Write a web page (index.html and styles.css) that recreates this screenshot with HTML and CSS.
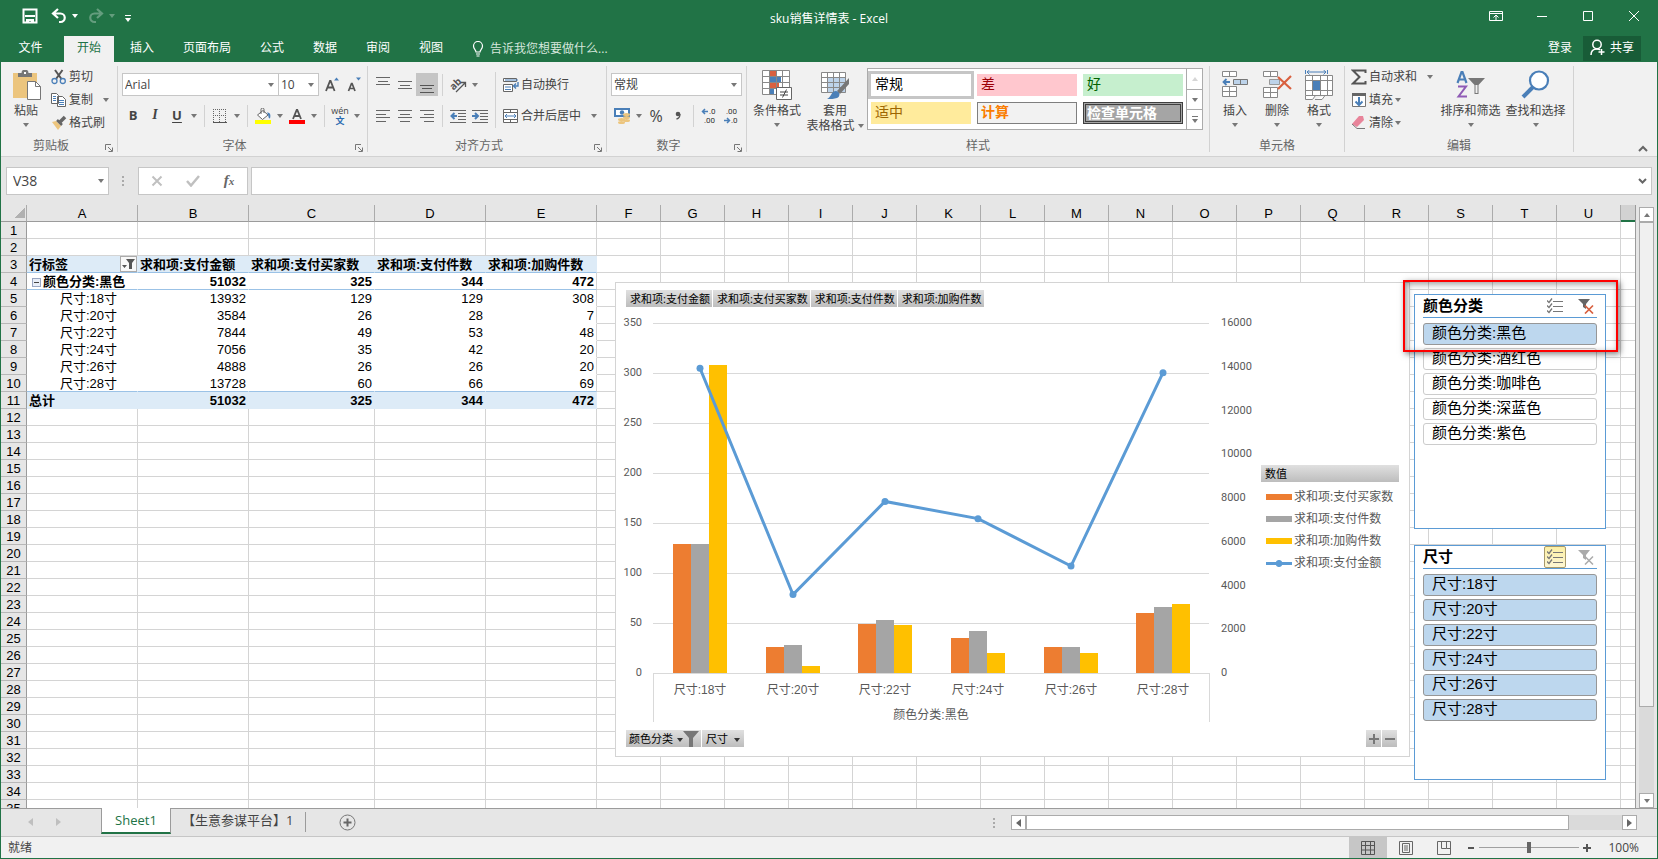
FILE: index.html
```html
<!DOCTYPE html>
<html lang="zh-CN">
<head>
    <meta charset="UTF-8">
    <title>sku销售详情表 - Excel</title>
    <link rel="stylesheet" href="styles.css">
</head>
<body>
    <!-- 标题栏 -->
    <header class="titlebar">
        <div class="quick">
            <button aria-label="保存"><svg width="16" height="16" viewBox="0 0 16 16"><path d="M1.5 1.5h13v13h-13z" fill="none" stroke="#fff" stroke-width="2"/><path d="M3 7h10v2H3zM4 11h8v4H9v-2H7v2H4z" fill="#fff"/></svg></button>
            <button aria-label="撤消"><svg width="16" height="16" viewBox="0 0 16 16"><path d="M7 1L2 5.500l5 4.500M2 5.500h7.500a4 4 0 0 1 0 8.500H8" fill="none" stroke="#fff" stroke-width="2.200"/></svg></button>
            <i class="caret white"></i>
            <button class="off" aria-label="恢复"><svg width="16" height="16" viewBox="0 0 16 16"><path d="M9 1l5 4.500L9 10M14 5.500H6.500a4 4 0 0 0 0 8.500H8" fill="none" stroke="#fff" stroke-width="2.200"/></svg></button>
            <i class="caret white off"></i>
            <button class="custom dash" aria-label="自定义快速访问工具栏"><i class="caret white"></i></button>
        </div>
        <h1>sku销售详情表 - Excel</h1>
        <div class="win">
            <button aria-label="功能区显示选项"><svg width="14" height="12" viewBox="0 0 14 12"><path d="M.5 1.500h13v9H.5zM.5 3.500h13M7 10V5.500M4.500 7.500L7 5l2.500 2.500" fill="none" stroke="#fff"/></svg></button>
            <button aria-label="最小化"><svg width="12" height="12" viewBox="0 0 12 12"><path d="M1 6.500h10" stroke="#fff"/></svg></button>
            <button aria-label="最大化"><svg width="12" height="12" viewBox="0 0 12 12"><path d="M1.500 1.500h9v9h-9z" fill="none" stroke="#fff"/></svg></button>
            <button aria-label="关闭"><svg width="12" height="12" viewBox="0 0 12 12"><path d="M1 1l10 10M11 1L1 11" stroke="#fff"/></svg></button>
        </div>
    </header>

    <nav class="tabs">
        <button class="file">文件</button>
        <button class="on">开始</button>
        <button>插入</button>
        <button>页面布局</button>
        <button>公式</button>
        <button>数据</button>
        <button>审阅</button>
        <button>视图</button>
        <button class="tell"><svg width="12" height="16" viewBox="0 0 12 16"><path d="M4 11C4 9 1.500 8 1.500 5a4.500 4.500 0 0 1 9 0c0 3-2.500 4-2.500 6zM4 13h4M4.500 15h3" fill="none" stroke="#fff" stroke-width="1.200"/></svg>告诉我您想要做什么...</button>
        <button class="login">登录</button>
        <button class="share"><svg width="16" height="17" viewBox="0 0 16 17"><path d="M1 16c0-3.500 2-6 6-6 1.500 0 2.500.4 3 .8M11.500 10v6M8.500 13h6" fill="none" stroke="#fff" stroke-width="1.500"/><circle cx="7" cy="5.500" r="4.200" fill="none" stroke="#fff" stroke-width="1.500"/></svg>共享</button>
    </nav>

    <!-- 功能区 -->
    <div class="ribbon">
        <section class="group g-clip">
            <div class="body">
                <button class="big"><svg width="30" height="30" viewBox="0 0 30 30"><path d="M2 3h24v25H2z" fill="#ecc57e"/><path d="M7 3h3.500a3.500 3.500 0 0 1 7 0H21v4H7z" fill="#777"/><path d="M13 2h2v2h-2z" fill="#fff"/><path d="M16.500 11.500h8l5 5v13h-13z" fill="#fff" stroke="#777"/><path d="M24.500 11.500v5h5" fill="none" stroke="#777"/></svg><span>粘贴</span><i class="caret"></i></button>
                <div class="col">
                    <button class="line"><svg width="16" height="16" viewBox="0 0 16 16"><path d="M4 1l6.500 9M11.500 1L5 10" fill="none" stroke="#555" stroke-width="2"/><circle cx="3.500" cy="12" r="2.500" fill="none" stroke="#4a7fb8" stroke-width="1.300"/><circle cx="11.800" cy="12" r="2.500" fill="none" stroke="#4a7fb8" stroke-width="1.300"/></svg>剪切</button>
                    <button class="line"><svg width="16" height="16" viewBox="0 0 16 16"><path d="M.5 1.500h5l2 2v8h-7zM6.500 4.500h5l3 3v7h-8z" fill="#fff" stroke="#666"/><path d="M2 4.500h3M2 6.500h3M2 8.500h3M8 8.500h5M8 10.500h5M8 12.500h5" stroke="#4a7fb8"/></svg>复制<i class="caret far"></i></button>
                    <button class="line"><svg width="16" height="16" viewBox="0 0 16 16"><path d="M1 7l4-1 5 5-3 4z" fill="#ecc57e"/><path d="M6 5l5 5" stroke="#666" stroke-width="2.500"/><path d="M9 7l5-5" stroke="#666" stroke-width="3.500"/></svg>格式刷</button>
                </div>
            </div>
            <div class="name"><span>剪贴板</span><button class="launch" aria-label="剪贴板选项"><svg width="8" height="8" viewBox="0 0 8 8"><path d="M.5 6V.5H6M3 3l4 4M7.500 3.500v4h-4" fill="none" stroke="#777"/></svg></button></div>
        </section>

        <section class="group g-font">
            <div class="body rows">
                <div class="row">
                    <label class="pick font"><select aria-label="字体"><option>Arial</option></select><i class="caret"></i></label>
                    <label class="pick size"><select aria-label="字号"><option>10</option></select><i class="caret"></i></label>
                    <button class="ic first" aria-label="增大字号"><svg width="16" height="16" viewBox="0 0 16 16"><path d="M2 14L6 4h.6l4 10M3.500 10.500h5.500" fill="none" stroke="#555" stroke-width="1.800"/><path d="M10 3.500l2.500-3 2.500 3z" fill="#4a7fb8"/></svg></button>
                    <button class="ic" aria-label="减小字号"><svg width="16" height="16" viewBox="0 0 16 16"><path d="M2.500 14L5.500 6.500h.6L9 14M4 11.500h4" fill="none" stroke="#555" stroke-width="1.700"/><path d="M10 .5h5l-2.500 3z" fill="#4a7fb8"/></svg></button>
                </div>
                <div class="row">
                    <button class="ic b">B</button>
                    <button class="ic i">I</button>
                    <button class="ic u">U</button>
                    <button class="drop" aria-label="下划线选项"><i class="caret"></i></button>
                    <span class="sep"></span>
                    <button class="ic" aria-label="边框"><svg width="14" height="14" viewBox="0 0 14 14"><path d="M0 .5h14M0 6.500h14M.5 0v14M6.500 0v14M12.500 0v14" stroke="#666" stroke-dasharray="1 1" fill="none"/><path d="M0 13.500h14" stroke="#555"/></svg></button>
                    <button class="drop" aria-label="边框选项"><i class="caret"></i></button>
                    <span class="sep"></span>
                    <button class="ic" aria-label="填充颜色"><svg width="16" height="16" viewBox="0 0 16 16"><path d="M2.500 7L8 2.500l5 4.500-5.500 4.500z" fill="#fff" stroke="#666"/><path d="M6 6V1.500a1.500 1.500 0 0 1 3 0V5" fill="none" stroke="#666"/><path d="M12 4.500c3 0 4 2 3 6-2 0-1-3-3-6z" fill="#4a7fb8"/><path d="M0 12h16v4H0z" fill="#ff0"/></svg></button>
                    <button class="drop" aria-label="填充颜色选项"><i class="caret"></i></button>
                    <button class="ic" aria-label="字体颜色"><svg width="16" height="16" viewBox="0 0 16 16"><path d="M4 11L7.700 2h.6L12 11M5.500 8h5" fill="none" stroke="#555" stroke-width="1.800"/><path d="M0 12h16v4H0z" fill="#f00"/></svg></button>
                    <button class="drop" aria-label="字体颜色选项"><i class="caret"></i></button>
                    <span class="sep"></span>
                    <button class="ic wen"><span>wén</span><b>文</b></button>
                    <button class="drop" aria-label="拼音选项"><i class="caret"></i></button>
                </div>
            </div>
            <div class="name"><span>字体</span><button class="launch" aria-label="字体设置"><svg width="8" height="8" viewBox="0 0 8 8"><path d="M.5 6V.5H6M3 3l4 4M7.500 3.500v4h-4" fill="none" stroke="#777"/></svg></button></div>
        </section>

        <section class="group g-align">
            <div class="body">
                <div class="rows">
                    <div class="row">
                        <button class="ic" aria-label="顶端对齐"><svg width="14" height="16" viewBox="0 0 14 16"><path d="M0 .5h14M2 4.500h10M0 7.500h14" stroke="#666"/></svg></button>
                        <button class="ic" aria-label="垂直居中"><svg width="14" height="16" viewBox="0 0 14 16"><path d="M0 4.500h14M2 8.500h10M0 11.500h14" stroke="#666"/></svg></button>
                        <button class="ic on" aria-label="底端对齐"><svg width="14" height="16" viewBox="0 0 14 16"><path d="M0 8.500h14M2 11.500h10M0 15.500h14" stroke="#555"/></svg></button>
                        <span class="sep"></span>
                        <button class="ic" aria-label="方向"><svg width="18" height="18" viewBox="0 0 18 18"><path d="M7 16l9-9M12 6.500h4.500V11" fill="none" stroke="#555" stroke-width="1.300"/><text x="1" y="12" transform="rotate(-45 6 9)" class="ab">ab</text></svg></button>
                        <button class="drop" aria-label="方向选项"><i class="caret"></i></button>
                    </div>
                    <div class="row">
                        <button class="ic" aria-label="左对齐"><svg width="14" height="12" viewBox="0 0 14 12"><path d="M0 .5h14M0 4.500h10M0 7.500h14M0 11.500h10" stroke="#666"/></svg></button>
                        <button class="ic" aria-label="居中"><svg width="14" height="12" viewBox="0 0 14 12"><path d="M0 .5h14M2 4.500h10M0 7.500h14M2 11.500h10" stroke="#666"/></svg></button>
                        <button class="ic" aria-label="右对齐"><svg width="14" height="12" viewBox="0 0 14 12"><path d="M0 .5h14M4 4.500h10M0 7.500h14M4 11.500h10" stroke="#666"/></svg></button>
                        <span class="sep"></span>
                        <button class="ic" aria-label="减少缩进量"><svg width="16" height="14" viewBox="0 0 16 14"><path d="M0 1.500h16M8 4.500h8M8 7.500h8M8 10.500h8M0 13.500h16" stroke="#666"/><path d="M7 7H2M4.500 4L1.500 7l3 3" fill="none" stroke="#4a7fb8" stroke-width="2"/></svg></button>
                        <button class="ic" aria-label="增加缩进量"><svg width="16" height="14" viewBox="0 0 16 14"><path d="M0 1.500h16M8 4.500h8M8 7.500h8M8 10.500h8M0 13.500h16" stroke="#666"/><path d="M0 7h5M3 4l3 3-3 3" fill="none" stroke="#4a7fb8" stroke-width="2"/></svg></button>
                    </div>
                </div>
                <span class="sep tall"></span>
                <div class="rows">
                    <div class="row">
                        <button class="line wide"><svg width="16" height="16" viewBox="0 0 16 16"><path d="M.5 1.500h13v3H.5zM.5 7.500h9v7h-9z" fill="#fff" stroke="#666"/><path d="M2 3h13M2 10h6M2 12.500h6" stroke="#4a7fb8"/><path d="M15 5v4h-4M13 6.500L10.500 9l2.500 2.500" fill="none" stroke="#4a7fb8" stroke-width="1.400"/></svg>自动换行</button>
                    </div>
                    <div class="row">
                        <button class="line wide"><svg width="16" height="16" viewBox="0 0 16 16"><path d="M.5 1.500h14v13H.5zM.5 4.500h14M.5 11.500h14M7.500 1.500v3M7.500 11.500v3" fill="#fff" stroke="#666"/><path d="M2 8h11M4 6L2 8l2 2M11 6l2 2-2 2" fill="none" stroke="#4a7fb8"/></svg>合并后居中<i class="caret far"></i></button>
                    </div>
                </div>
            </div>
            <div class="name"><span>对齐方式</span><button class="launch" aria-label="对齐设置"><svg width="8" height="8" viewBox="0 0 8 8"><path d="M.5 6V.5H6M3 3l4 4M7.500 3.500v4h-4" fill="none" stroke="#777"/></svg></button></div>
        </section>

        <section class="group g-num">
            <div class="body rows">
                <div class="row"><label class="pick fmt"><select aria-label="数字格式"><option>常规</option></select><i class="caret"></i></label></div>
                <div class="row">
                    <button class="ic" aria-label="会计数字格式"><svg width="16" height="16" viewBox="0 0 16 16"><path d="M0 0h16v9H0z" fill="#4a7fb8"/><path d="M2 2h12v5H2z" fill="#fff"/><circle cx="8" cy="4.500" r="2.200" fill="#4a7fb8"/><ellipse cx="12.500" cy="6.500" rx="3.500" ry="1.500" fill="#ecc57e"/><ellipse cx="12.500" cy="9.500" rx="3.500" ry="1.500" fill="#ecc57e"/><ellipse cx="12.500" cy="12.500" rx="3.500" ry="1.500" fill="#ecc57e"/><ellipse cx="7.500" cy="11.500" rx="3.500" ry="1.500" fill="#ecc57e"/><ellipse cx="7.500" cy="14.500" rx="3.500" ry="1.500" fill="#ecc57e"/></svg></button>
                    <button class="drop" aria-label="货币选项"><i class="caret"></i></button>
                    <button class="ic pct">%</button>
                    <button class="ic comma" aria-label="千位分隔样式"><svg width="6" height="9" viewBox="0 0 6 9"><circle cx="3" cy="3" r="2.300" fill="#555"/><path d="M5 3c0 3-1.500 4.500-3.500 5" fill="none" stroke="#555" stroke-width="1.300"/></svg></button>
                    <span class="sep"></span>
                    <button class="ic dec" aria-label="增加小数位数"><svg width="16" height="16" viewBox="0 0 16 16"><path d="M7 3.500H2M4 1L1.500 3.500 4 6" fill="none" stroke="#4a7fb8" stroke-width="1.500"/><text x="8" y="6">.0</text><text x="3" y="15">.00</text></svg></button>
                    <button class="ic dec" aria-label="减少小数位数"><svg width="16" height="16" viewBox="0 0 16 16"><path d="M1 12.500h5M4 10l2.500 2.500L4 15" fill="none" stroke="#4a7fb8" stroke-width="1.500"/><text x="3" y="6">.00</text><text x="8" y="15">.0</text></svg></button>
                </div>
            </div>
            <div class="name"><span>数字</span><button class="launch" aria-label="数字设置"><svg width="8" height="8" viewBox="0 0 8 8"><path d="M.5 6V.5H6M3 3l4 4M7.500 3.500v4h-4" fill="none" stroke="#777"/></svg></button></div>
        </section>

        <section class="group g-style">
            <div class="body">
                <button class="big w56"><svg width="30" height="30" viewBox="0 0 30 30"><path d="M.5.500h27v24H.5z" fill="#fff"/><path d="M8 1h6v6H8zM8 13h9v6H8z" fill="#d9603f"/><path d="M8 7h11v6H8zM8 19h4v6H8z" fill="#4a7fb8"/><path d="M.5.500h27v24H.5zM.5 6.500h27M.5 12.500h27M.5 18.500h27M7.500.500v24M14.500.500v24M20.500.500v24" fill="none" stroke="#888"/><path d="M14.500 17.500h15v12h-15z" fill="#fff" stroke="#666"/><path d="M18 22h8M18 25h8M24.500 19.500l-4 8" stroke="#444"/></svg><span>条件格式</span><i class="caret"></i></button>
                <button class="big w60"><svg width="30" height="30" viewBox="0 0 30 30"><path d="M1.500 2.500h24v20h-24z" fill="#fff"/><path d="M8 8h18v15H8z" fill="#bdd3ea"/><path d="M1.500 2.500h24v20h-24zM1.500 7.500h24M1.500 12.500h24M1.500 17.500h24M7.500 2.500v20M13.500 2.500v20M19.500 2.500v20" fill="none" stroke="#888"/><path d="M29 8v6l-9 10-3-3z" fill="#777"/><path d="M7 29c4-1 4-8 9-8 5 1 4 6 1 7-3 1-6 1-10 1z" fill="#4a7fb8"/></svg><span>套用</span><span>表格格式 <i class="caret"></i></span></button>
                <div class="gallery">
                    <div class="cells">
                        <button class="normal">常规</button><button class="bad">差</button><button class="good">好</button>
                        <button class="mid">适中</button><button class="calc">计算</button><button class="check">检查单元格</button>
                    </div>
                    <div class="spin">
                        <button class="off" aria-label="上一行"><i class="caret up"></i></button>
                        <button aria-label="下一行"><i class="caret"></i></button>
                        <button class="dash" aria-label="其他"><i class="caret"></i></button>
                    </div>
                </div>
            </div>
            <div class="name"><span>样式</span></div>
        </section>

        <section class="group g-cell">
            <div class="body">
                <button class="big w42"><svg width="28" height="30" viewBox="0 0 28 30"><path d="M1.500 1.500h14v5h-14zM8.500 1.500v5M1.500 16.500h14v10h-14zM1.500 21.500h14M8.500 16.500v10" fill="#fff" stroke="#888"/><path d="M12.500 9.500h14v5h-14zM19.500 9.500v5" fill="#bdd3ea" stroke="#777"/><path d="M9 12H3M5.500 9L2.500 12l3 3" fill="none" stroke="#4a7fb8" stroke-width="1.800"/></svg><span>插入</span><i class="caret"></i></button>
                <button class="big w42"><svg width="30" height="30" viewBox="0 0 30 30"><path d="M1.500 1.500h14v5h-14zM8.500 1.500v5M1.500 17.500h14v10h-14zM1.500 22.500h14M8.500 17.500v10" fill="#fff" stroke="#888"/><path d="M7.500 9.500h10v5h-10z" fill="#bdd3ea" stroke="#999"/><path d="M16 7l13 12M29 6L16 19" stroke="#d9603f" stroke-width="2.200"/></svg><span>删除</span><i class="caret"></i></button>
                <button class="big w42"><svg width="30" height="30" viewBox="0 0 30 30"><path d="M1.500 0v4M23.500 0v4M3 2h19M5.500 0L3 2l2.500 2.500M19.500 0L22 2l-2.500 2.500" fill="none" stroke="#4a7fb8"/><path d="M1.500 5.500h27v20h-27zM1.500 10.500h27M1.500 20.500h27M8.500 5.500v20M16.500 5.500v20M23.500 5.500v20M1.500 25.500v4h7l3-4M11 29.500h7l3-4" fill="#fff" stroke="#888"/><path d="M9 11h7v9H9z" fill="#4a7fb8"/></svg><span>格式</span><i class="caret"></i></button>
            </div>
            <div class="name"><span>单元格</span></div>
        </section>

        <section class="group g-edit">
            <div class="body">
                <div class="col">
                    <button class="line"><svg width="16" height="16" viewBox="0 0 16 16"><path d="M14.500 4V1.500H2L8.500 8 2 14.500h12.500V12" fill="none" stroke="#555" stroke-width="2"/></svg>自动求和<i class="caret far"></i></button>
                    <button class="line"><svg width="16" height="16" viewBox="0 0 16 16"><path d="M1.500 1.500h13v13h-13z" fill="#fff" stroke="#777"/><path d="M1 1h14v3H1z" fill="#666"/><path d="M8 5v8M4.500 9.500L8 13l3.500-3.500" fill="none" stroke="#4a7fb8" stroke-width="2"/></svg>填充<i class="caret"></i></button>
                    <button class="line"><svg width="16" height="16" viewBox="0 0 16 16"><path d="M8 1l4 0 1 4-7 7-5-3z" fill="#e8849a"/><path d="M1 9l5 4.500h8" fill="none" stroke="#777"/></svg>清除<i class="caret"></i></button>
                </div>
                <button class="big w65"><svg width="32" height="30" viewBox="0 0 32 30"><path d="M2.500 13L6.500 2h1l4 11M4 9.500h6" fill="none" stroke="#4a7fb8" stroke-width="2.200"/><path d="M3 16.500h8L3.500 26.500H12" fill="none" stroke="#8f5bb5" stroke-width="2"/><path d="M13 8h17l-6.500 7v9h-4v-9z" fill="#777"/><path d="M20.500 15h2v8h-2z" fill="#f1f1f1"/></svg><span>排序和筛选</span><i class="caret"></i></button>
                <button class="big w65"><svg width="30" height="30" viewBox="0 0 30 30"><path d="M12 17L2 27" stroke="#4a7fb8" stroke-width="4"/><circle cx="18" cy="10.500" r="9" fill="#fff" stroke="#4a7fb8" stroke-width="2.200"/></svg><span>查找和选择</span><i class="caret"></i></button>
            </div>
            <div class="name"><span>编辑</span></div>
        </section>
        <button class="fold" aria-label="折叠功能区"><svg width="10" height="7" viewBox="0 0 10 7"><path d="M1 6l4-4 4 4" fill="none" stroke="#666" stroke-width="2"/></svg></button>
    </div>

    <!-- 编辑栏 -->
    <div class="formula">
        <label class="pick ref"><input type="text" value="V38" aria-label="名称框"><i class="caret"></i></label>
        <span class="dots"></span>
        <div class="fx">
            <button aria-label="取消"><svg width="12" height="12" viewBox="0 0 12 12"><path d="M1.500 1.500l9 9M10.500 1.500l-9 9" stroke="#c0c0c0" stroke-width="2"/></svg></button>
            <button aria-label="输入"><svg width="14" height="12" viewBox="0 0 14 12"><path d="M1 6l4 4.500L13 1" fill="none" stroke="#c0c0c0" stroke-width="2.500"/></svg></button>
            <button class="fn">f<small>x</small></button>
        </div>
        <label class="pick bar"><input type="text" aria-label="编辑栏"><svg width="9" height="7" viewBox="0 0 9 7"><path d="M1 1l3.500 3.500L8 1" fill="none" stroke="#666" stroke-width="2"/></svg></label>
    </div>

    <!-- 工作区 -->
    <main class="work">
        <div class="sheet">
            <table id="grid"></table>

            <div class="chart">
                <div class="fields">
                    <button>求和项:支付金额</button><button>求和项:支付买家数</button><button>求和项:支付件数</button><button>求和项:加购件数</button>
                </div>
                <div class="middle">
                    <svg id="plot" width="639" height="423" viewBox="0 0 639 423"></svg>
                    <div class="legend">
                        <button>数值</button>
                        <ul>
                            <li><i class="orange"></i>求和项:支付买家数</li>
                            <li><i class="gray"></i>求和项:支付件数</li>
                            <li><i class="yellow"></i>求和项:加购件数</li>
                            <li><i class="blue"></i>求和项:支付金额</li>
                        </ul>
                    </div>
                </div>
                <div class="fields">
                    <button class="axis">颜色分类<i class="caret dark"></i><svg width="16" height="17" viewBox="0 0 16 17"><path d="M0 1h16l-6 7v9H6V8z" fill="#777"/></svg></button><button class="axis wide">尺寸<i class="caret dark"></i></button>
                    <span class="grow"></span>
                    <button class="pm" aria-label="展开"><svg width="10" height="10" viewBox="0 0 10 10"><path d="M5 0v10M0 5h10" stroke="#777" stroke-width="2"/></svg></button><button class="pm" aria-label="折叠"><svg width="10" height="10" viewBox="0 0 10 10"><path d="M0 5h10" stroke="#777" stroke-width="2"/></svg></button>
                </div>
            </div>

            <div class="slicer color">
                <div class="head"><h2>颜色分类</h2>
                    <button aria-label="多选"><svg width="16" height="16" viewBox="0 0 16 16"><path d="M6 3.500h10M6 8.500h10M6 13.500h10" stroke="#777"/><path d="M0 2.500l2 2L5 .5M0 7.500l2 2 3-4M0 12.500l2 2 3-4" fill="none" stroke="#777" stroke-width="1.300"/></svg></button>
                    <button aria-label="清除筛选器"><svg width="16" height="16" viewBox="0 0 16 16"><path d="M0 1h12L8 6v5L5 9V6z" fill="#666"/><path d="M7 7.500l8 8M15 7.500l-8 8" stroke="#d9603f" stroke-width="1.700"/></svg></button>
                </div>
                <button class="item on">颜色分类:黑色</button>
                <button class="item">颜色分类:酒红色</button>
                <button class="item">颜色分类:咖啡色</button>
                <button class="item">颜色分类:深蓝色</button>
                <button class="item">颜色分类:紫色</button>
            </div>
            <div class="slicer measure">
                <div class="head"><h2>尺寸</h2>
                    <button class="on" aria-label="多选"><svg width="16" height="16" viewBox="0 0 16 16"><path d="M6 3.500h10M6 8.500h10M6 13.500h10" stroke="#777"/><path d="M0 2.500l2 2L5 .5M0 7.500l2 2 3-4M0 12.500l2 2 3-4" fill="none" stroke="#777" stroke-width="1.300"/></svg></button>
                    <button aria-label="清除筛选器"><svg width="16" height="16" viewBox="0 0 16 16"><path d="M0 1h12L8 6v5L5 9V6z" fill="#aaa"/><path d="M7 7.500l8 8M15 7.500l-8 8" stroke="#aaa" stroke-width="1.500"/></svg></button>
                </div>
                <button class="item on">尺寸:18寸</button>
                <button class="item on">尺寸:20寸</button>
                <button class="item on">尺寸:22寸</button>
                <button class="item on">尺寸:24寸</button>
                <button class="item on">尺寸:26寸</button>
                <button class="item on">尺寸:28寸</button>
            </div>
            <div class="mark"></div>
        </div>
        <div class="vscroll">
            <button aria-label="向上滚动"><i class="caret up"></i></button>
            <span class="thumb"></span>
            <span class="track"></span>
            <button aria-label="向下滚动"><i class="caret"></i></button>
        </div>
    </main>

    <div class="sheets">
        <div class="nav"><button aria-label="上一个工作表"><i class="tri left"></i></button><button aria-label="下一个工作表"><i class="tri right"></i></button></div>
        <button class="tab on">Sheet1</button>
        <button class="tab">【生意参谋平台】1</button>
        <button class="add" aria-label="新工作表"><svg width="17" height="17" viewBox="0 0 17 17"><circle cx="8.500" cy="8.500" r="7.500" fill="none" stroke="#777"/><path d="M8.500 4.500v8M4.500 8.500h8" stroke="#666" stroke-width="2"/></svg></button>
        <span class="grow"></span>
        <span class="dots"></span>
        <div class="hscroll">
            <button aria-label="向左滚动"><i class="tri left"></i></button>
            <span class="thumb"></span>
            <span class="track"></span>
            <button aria-label="向右滚动"><i class="tri right"></i></button>
        </div>
    </div>

    <footer class="status">
        <span>就绪</span>
        <span class="grow"></span>
        <button class="view on" aria-label="普通"><svg width="14" height="14" viewBox="0 0 14 14"><path d="M.5.500h13v13H.5zM.5 4.500h13M.5 9h13M4.500.500v13M9.500.500v13" fill="none" stroke="#555"/></svg></button>
        <button class="view" aria-label="页面布局"><svg width="14" height="14" viewBox="0 0 14 14"><path d="M.5.500h13v13H.5zM3.500 2.500h7v9h-7zM5 5h4M5 7h4M5 9h4" fill="none" stroke="#666"/></svg></button>
        <button class="view" aria-label="分页预览"><svg width="14" height="14" viewBox="0 0 14 14"><path d="M.5.500h13v13H.5zM4.500.500v7h5v-7M9.500 7.500h4" fill="none" stroke="#666"/></svg></button>
        <button class="step" aria-label="缩小"><svg width="8" height="8" viewBox="0 0 8 8"><path d="M1 4h6" stroke="#555" stroke-width="2"/></svg></button>
        <input type="range" min="0" max="100" value="50" aria-label="显示比例">
        <button class="step" aria-label="放大"><svg width="8" height="8" viewBox="0 0 8 8"><path d="M4 0v8M0 4h8" stroke="#555" stroke-width="2"/></svg></button>
        <button class="zoom">100%</button>
    </footer>
    <script src="script.js"></script>
</body>
</html>
```
FILE: styles.css
```css
*{
    margin: 0;
    padding: 0;
    box-sizing: border-box;
    list-style: none;
}
body {
    display: flex;
    flex-direction: column;
    height: 100vh;
    overflow: hidden;
    border: 1px solid #217346;
    border-top: 0;
    font: 12px/16px "Open Sans", "Noto Sans CJK SC", sans-serif;
    color: #444;
    background: #e6e6e6;
}
button, input, select {
    font: inherit;
    color: inherit;
    border: 0;
    background: none;
}
button {
    display: flex;
    flex: none;
    align-items: center;
    justify-content: center;
    white-space: nowrap;
}
svg {
    display: block;
    flex: none;
}
.grow {
    flex: 1;
}
.off {
    opacity: 0.3;
}
/* 小三角 */
.caret {
    display: inline-block;
    flex: none;
    border: 3px solid transparent;
    border-top: 4px solid #777;
    border-bottom: 0;
}
.caret.up {
    border-top: 0;
    border-bottom: 4px solid #777;
}
.caret.white {
    border-top-color: #fff;
}
.caret.dark {
    border-top-color: #333;
}
.caret.far {
    margin-left: 8px;
}
/* 三角上面带一条横线 */
.dash {
    flex-direction: column;
    gap: 2px;
}
.dash::before {
    content: "";
    width: 6px;
    height: 1px;
    background: #777;
}
.tri {
    border: 4px solid transparent;
}
.tri.left {
    border-right: 5px solid #666;
    border-left: 0;
}
.tri.right {
    border-left: 5px solid #666;
    border-right: 0;
}

/* 标题栏 */
.titlebar {
    display: grid;
    grid-template-columns: 1fr auto 1fr;
    flex: none;
    height: 36px;
    color: #fff;
    background: #217346;
}
.titlebar h1 {
    padding-top: 2px;
    font-size: 12px;
    font-weight: normal;
    line-height: 34px;
}
.quick {
    display: flex;
    align-items: center;
    padding: 0 0 4px 21px;
}
.quick button {
    margin-right: 5px;
}
.quick button + button {
    margin-left: 8px;
}
.quick .caret {
    margin-right: 10px;
}
.quick .custom {
    padding-top: 4px;
}
.quick .custom .caret {
    margin: 0;
}
.custom::before {
    background: #fff;
}
.win {
    display: flex;
    justify-content: flex-end;
    padding-bottom: 4px;
}
.win button {
    width: 46px;
}
.tabs {
    display: flex;
    flex: none;
    gap: 3px;
    height: 26px;
    padding-right: 16px;
    color: #fff;
    background: #217346;
}
.tabs button {
    padding: 0 13px 2px;
}
.tabs .file {
    width: 60px;
    padding-left: 12px;
}
.tabs .on {
    color: #217346;
    background: #f1f1f1;
}
.tabs .tell {
    gap: 6px;
    padding-bottom: 0;
    color: #d5e6dc;
}
.tabs .login {
    margin-left: auto;
    padding: 0 8px 2px;
}
.tabs .share {
    gap: 4px;
    padding: 0 7px 2px;
    margin-bottom: 1px;
    background: #185c37;
}

/* 功能区 */
.ribbon {
    display: flex;
    flex: none;
    height: 95px;
    padding: 4px 0;
    background: #f1f1f1;
    border-bottom: 1px solid #d2d2d2;
}
.group {
    display: flex;
    flex: none;
    flex-direction: column;
    border-right: 1px solid #d2d2d2;
}
.g-clip { width: 117px; }
.g-font { width: 250px; }
.g-align { width: 239px; }
.g-num { width: 140px; }
.g-font .body, .g-align .body, .g-num .body, .g-cell .body { padding-left: 4px; }
.g-style { width: 463px; }
.g-style .body { padding-left: 2px; }
.g-cell { width: 135px; }
.g-edit { width: 229px; }
.g-edit .body { padding-left: 6px; }
.g-edit .col { width: 87px; }
.body {
    display: flex;
    height: 72px;
}
.name {
    display: flex;
    height: 14px;
    line-height: 16px;
    color: #666;
}
.name span {
    flex: 1;
    text-align: center;
}
.launch {
    align-items: flex-end;
    width: 16px;
}
.big {
    flex-direction: column;
    justify-content: flex-start;
    width: 50px;
    padding-top: 4px;
    line-height: 15px;
}
.big svg {
    margin-bottom: 3px;
}
.big > .caret {
    margin-top: 5px;
}
.big span .caret {
    vertical-align: 2px;
}
.w42 { width: 42px; }
.w56 { width: 56px; }
.w60 { width: 60px; }
.w65 { width: 65px; }
.col {
    display: flex;
    flex-direction: column;
    gap: 1px;
}
.line {
    justify-content: flex-start;
    gap: 2px;
    height: 22px;
}
.line.wide {
    padding-left: 3px;
}
.rows {
    display: flex;
    flex-direction: column;
    gap: 8px;
    padding-top: 7px;
}
.row {
    display: flex;
    align-items: center;
    height: 23px;
}
.ic {
    width: 22px;
    height: 23px;
}
.ic.on {
    background: #c5c5c5;
}
.ic.first {
    margin-left: 2px;
}
.drop {
    width: 12px;
    height: 23px;
}
.sep {
    width: 1px;
    height: 22px;
    margin: 0 4px;
    background: #d2d2d2;
}
.sep.tall {
    height: 56px;
    margin-top: 6px;
}
.b, .i, .u {
    padding-bottom: 2px;
    font-size: 13px;
    font-weight: bold;
}
.i {
    font-family: "Liberation Serif", serif;
    font-size: 14px;
    font-style: italic;
}
.u {
    text-decoration: underline;
    text-underline-offset: 2px;
}
.wen {
    flex-direction: column;
    font-size: 9px;
    line-height: 10px;
}
.wen b {
    color: #2a6bb0;
}
.ab {
    font-size: 10px;
    font-weight: bold;
    fill: #555;
}
.pct {
    font-size: 16px;
}
.dec text {
    font-family: Roboto, sans-serif;
    font-size: 8px;
    fill: #333;
}
.pick {
    display: flex;
    flex: none;
    align-items: center;
    height: 23px;
    padding-right: 4px;
    background: #fff;
    border: 1px solid #c6c6c6;
}
.pick select, .pick input {
    flex: 1;
    min-width: 0;
    height: 21px;
    padding-left: 2px;
    appearance: none;
    outline: 0;
}
.font { width: 157px; }
.size { width: 41px; margin-left: -1px; }
.fmt { width: 131px; }
.gallery {
    display: flex;
    height: 62px;
    margin: 2px 0 0 2px;
    background: #fff;
    border: 1px solid #ababab;
}
.cells {
    display: grid;
    grid-template-columns: repeat(3, 100px);
    grid-auto-rows: 22px;
    gap: 6px;
    padding: 5px 3px;
}
.cells button {
    justify-content: flex-start;
    padding: 0 0 2px 4px;
    font-size: 14px;
}
.normal { color: #000; outline: 3px solid #c6c6c6; }
.bad { color: #9c0006; background: #ffc7ce; }
.good { color: #006100; background: #c6efce; }
.mid { color: #9c6500; background: #ffeb9c; }
.calc { color: #fa7d00; font-weight: bold; background: #f2f2f2; border: 1px solid #7f7f7f; }
.check { color: #fff; font-weight: bold; background: #a5a5a5; border: 3px double #3f3f3f; }
.cells .calc { padding-left: 3px; }
.cells .check { padding: 0 0 0 1px; }
.spin {
    display: grid;
    grid-template-rows: repeat(3, 20px);
    width: 16px;
    border-left: 1px solid #ababab;
}
.spin button + button {
    border-top: 1px solid #ababab;
}
.fold {
    align-items: flex-end;
    width: 20px;
    margin-left: auto;
    margin-right: 4px;
}

/* 编辑栏 */
.formula {
    display: flex;
    flex: none;
    height: 48px;
    padding: 10px 5px;
}
.formula .pick {
    height: 28px;
}
.formula input {
    padding: 0 0 2px 6px;
    font-size: 14px;
}
.ref { width: 103px; }
.formula .bar {
    flex: 1;
    margin-left: 3px;
}
.dots {
    align-self: center;
    width: 2px;
    height: 10px;
    background: repeating-linear-gradient(#aaa 0 2px, transparent 2px 4px);
}
.formula .dots {
    margin: 0 14px 0 13px;
}
.fx {
    display: flex;
    background: #fff;
    border: 1px solid #c6c6c6;
}
.fx button {
    width: 36px;
}
.fx .fn {
    align-items: baseline;
    font: italic bold 15px/24px "Liberation Serif", serif;
    color: #666;
}
.fn small {
    font-size: 11px;
}

/* 工作区 */
.work {
    display: flex;
    flex: 1;
    min-height: 0;
}
.sheet {
    position: relative;
    flex: 1;
    min-width: 0;
    overflow: hidden;
    background: #fff;
    border-right: 1px solid #9b9b9b;
}
#grid {
    width: 0;
    table-layout: fixed;
    border-collapse: separate;
    border-spacing: 0;
    font: 13px/15px "Liberation Sans", "Noto Sans CJK SC", sans-serif;
    color: #000;
}
#grid th {
    height: 17px;
    padding-top: 1px;
    font-weight: normal;
    background: #e6e6e6;
    border-right: 1px solid #ababab;
    border-bottom: 1px solid #9b9b9b;
}
#grid tbody th {
    border-right-color: #9b9b9b;
    border-bottom-color: #b8b8b8;
}
#grid th.sel {
    background: #d2d2d2;
    border-bottom: 2px solid #217346;
}
#grid .corner {
    background: linear-gradient(135deg, transparent 50%, #b1b1b1 50%) no-repeat 14px 3px / 10px 10px #e6e6e6;
}
#grid td {
    height: 17px;
    padding: 1px 2px 0;
    overflow: hidden;
    white-space: nowrap;
    border-right: 1px solid #d4d4d4;
    border-bottom: 1px solid #d4d4d4;
}
#grid .pv {
    text-align: right;
    border-color: #fff;
}
#grid .pv:nth-child(2), #grid .title .pv {
    text-align: left;
}
#grid .pv:nth-child(6) {
    border-right-color: #d4d4d4;
}
#grid .title .pv, #grid .sum .pv {
    font-weight: bold;
    background: #ddebf7;
    border-color: #ddebf7;
}
#grid .top .pv {
    font-weight: bold;
}
#grid .title .pv, #grid .top .pv, #grid .last .pv {
    border-bottom-color: #9bc2e6;
}
#grid .detail .pv:nth-child(2) {
    padding-left: 33px;
}
.filter {
    float: right;
    width: 17px;
    height: 16px;
    margin: -1px -2px 0 0;
    background: #f8f8f8;
    border: 1px solid #ababab;
}
.minus {
    display: inline-flex;
    width: 9px;
    height: 9px;
    margin: 0 2px 0 3px;
    vertical-align: 1px;
    background: #e8eef8;
    border: 1px solid #9aa7c2;
}

/* 数据透视图 */
.chart {
    position: absolute;
    left: 614px;
    top: 77px;
    display: flex;
    flex-direction: column;
    width: 795px;
    height: 475px;
    padding: 7px 0 0;
    background: #fff;
    border: 1px solid #d4d4d4;
}
.fields {
    display: flex;
    gap: 1px;
    height: 17px;
    padding: 0 12px 0 10px;
}
.fields button, .legend button {
    height: 17px;
    padding: 0 2px 0 4px;
    font-size: 11px;
    color: #000;
    background: linear-gradient(#e0e0e0, #bdbdbd);
}
.fields .axis {
    padding: 0 3px;
}
.fields .axis svg {
    margin-right: -1px;
}
.fields .axis .caret {
    margin-left: 4px;
    margin-top: 3px;
    border-width: 4px 3px 0;
}
.fields .wide {
    gap: 2px;
    padding: 0 4px;
}
.fields .pm {
    width: 15px;
    padding: 0;
}
.middle {
    display: flex;
    gap: 6px;
}
#plot text {
    font: 11px Roboto, "Noto Sans CJK SC", sans-serif;
    fill: #595959;
}
#plot .cat {
    font: 12px "Liberation Sans", "Noto Sans CJK SC", sans-serif;
    text-anchor: middle;
}
#plot .end {
    text-anchor: end;
}
.legend {
    width: 138px;
    padding-top: 158px;
}
.legend button {
    justify-content: flex-start;
    width: 100%;
}
.legend ul {
    padding: 4px 0 0 5px;
}
.legend li {
    display: flex;
    gap: 2px;
    align-items: center;
    height: 22px;
    color: #595959;
    white-space: nowrap;
}
.legend i {
    width: 26px;
    height: 6px;
}
.orange { background: #ed7d31; }
.gray { background: #a5a5a5; }
.yellow { background: #ffc000; }
.legend .blue {
    background: radial-gradient(circle, #5b9bd5 3px, transparent 4px), linear-gradient(transparent 2px, #5b9bd5 2px 5px, transparent 5px);
    height: 7px;
}

/* 切片器 */
.slicer {
    position: absolute;
    left: 1413px;
    display: flex;
    flex-direction: column;
    gap: 3px;
    width: 192px;
    height: 235px;
    padding: 0 8px;
    color: #000;
    background: #fff;
    border: 1px solid #5b9bd5;
}
.color { top: 89px; }
.measure { top: 340px; }
.head {
    display: flex;
    gap: 9px;
    height: 23px;
    margin-bottom: 2px;
    border-bottom: 1px solid #5b9bd5;
}
.head h2 {
    flex: 1;
    font-size: 15px;
    font-weight: bold;
    line-height: 20px;
}
.head button {
    width: 22px;
    height: 22px;
}
.head .on {
    background: linear-gradient(#fdf0a4, #fdf6d4);
    border: 1px solid #a89a6b;
    border-radius: 2px;
}
.item {
    justify-content: flex-start;
    height: 22px;
    padding: 0 0 2px 8px;
    font: 15px/18px "Liberation Sans", "Noto Sans CJK SC", sans-serif;
    border: 1px solid #ccc;
    border-radius: 3px;
}
.item.on {
    background: #bdd7ee;
    border-color: #979797;
}
.mark {
    position: absolute;
    left: 1402px;
    top: 75px;
    width: 215px;
    height: 72px;
    border: 2px solid #f00;
    box-shadow: 2px 2px 6px rgba(0, 0, 0, 0.5), inset 2px 2px 6px rgba(0, 0, 0, 0.4);
}

/* 滚动条 */
.vscroll {
    display: flex;
    flex-direction: column;
    width: 21px;
    padding: 2px 3px 0;
}
.vscroll button, .hscroll button {
    width: 15px;
    height: 15px;
    background: #fff;
    border: 1px solid #ababab;
}
.vscroll .thumb {
    flex: 486;
    background: #f0f0f0;
    border: 1px solid #ababab;
}
.vscroll .track {
    flex: 86;
    background: #dadada;
}
.sheets {
    display: flex;
    flex: none;
    height: 28px;
    padding-right: 20px;
    border-top: 1px solid #9b9b9b;
}
.nav {
    display: flex;
    width: 100px;
    height: 25px;
    padding-left: 15px;
}
.nav button {
    width: 28px;
    opacity: 0.3;
}
.tab {
    height: 20px;
    margin-top: 3px;
    padding: 0 12px 4px 11px;
    font-size: 13px;
    border-right: 1px solid #9b9b9b;
}
.tab.on {
    width: 70px;
    height: 26px;
    margin-top: -1px;
    padding: 0;
    color: #217346;
    background: #fff;
    border-left: 1px solid #9b9b9b;
    border-bottom: 2px solid #217346;
}
.add {
    height: 26px;
    margin-left: 33px;
}
.sheets .dots {
    margin-right: 16px;
}
.hscroll {
    display: flex;
    width: 626px;
    padding-top: 6px;
}
.hscroll .thumb {
    flex: 1;
    height: 15px;
    background: #fff;
    border: 1px solid #ababab;
}
.hscroll .track {
    width: 53px;
    height: 15px;
    background: #dadada;
}

/* 状态栏 */
.status {
    display: flex;
    flex: none;
    align-items: center;
    height: 22px;
    padding: 0 18px 0 7px;
    background: #f1f1f1;
    border-top: 1px solid #c6c6c6;
}
.view {
    width: 38px;
    height: 21px;
}
.view.on {
    background: #c6c6c6;
}
.step {
    width: 16px;
}
.status input {
    width: 100px;
    height: 16px;
    appearance: none;
    background: linear-gradient(#a0a0a0, #a0a0a0) no-repeat center / 100% 1px;
}
.status input::-webkit-slider-thumb {
    width: 4px;
    height: 11px;
    appearance: none;
    background: #666;
}
.zoom {
    width: 44px;
    justify-content: flex-end;
}
```
FILE: script.js
```javascript
var widths = [26, 111, 111, 126, 111, 111];
var letters = 'ABCDEFGHIJKLMNOPQRSTUV';
// 数据透视表, 从第3行开始
var pivot = [
    ['title', '行标签', '求和项:支付金额', '求和项:支付买家数', '求和项:支付件数', '求和项:加购件数'],
    ['top', '颜色分类:黑色', 51032, 325, 344, 472],
    ['detail', '尺寸:18寸', 13932, 129, 129, 308],
    ['detail', '尺寸:20寸', 3584, 26, 28, 7],
    ['detail', '尺寸:22寸', 7844, 49, 53, 48],
    ['detail', '尺寸:24寸', 7056, 35, 42, 20],
    ['detail', '尺寸:26寸', 4888, 26, 26, 20],
    ['detail last', '尺寸:28寸', 13728, 60, 66, 69],
    ['sum', '总计', 51032, 325, 344, 472]
];

function drawGrid() {
    var html = '<colgroup>';
    for (var c = 0; c <= letters.length; c++) {
        html += '<col style="width:' + (widths[c] || 64) + 'px">';
    }
    html += '</colgroup><thead><tr><th class="corner"></th>';
    for (c = 0; c < letters.length; c++) {
        html += letters[c] == 'V' ? '<th class="sel"></th>' : '<th>' + letters[c] + '</th>';
    }
    html += '</tr></thead><tbody>';
    for (var r = 1; r <= 35; r++) {
        var data = pivot[r - 3];
        html += '<tr class="' + (data ? data[0] : '') + '"><th>' + r + '</th>';
        for (c = 1; c <= letters.length; c++) {
            if (data && c < 6) {
                var before = '';
                if (c == 1 && data[0] == 'title') {
                    before = '<button class="filter" aria-label="筛选"><svg width="13" height="12" viewBox="0 0 13 12"><path d="M4 1h9L10 5v6H7V5zM0 7h5L2.500 10z" fill="#555"/></svg></button>';
                }
                if (c == 1 && data[0] == 'top') {
                    before = '<button class="minus" aria-label="折叠"><svg width="5" height="5" viewBox="0 0 5 5"><path d="M0 2.500h5" stroke="#444"/></svg></button>';
                }
                html += '<td class="pv">' + before + data[c] + '</td>';
            } else {
                html += '<td></td>';
            }
        }
        html += '</tr>';
    }
    document.getElementById('grid').innerHTML = html + '</tbody>';
}

function drawChart() {
    var base = 366, left = 37, right = 593;
    var colors = ['#ed7d31', '#a5a5a5', '#ffc000'];
    var rows = pivot.slice(2, 8);
    var step = (right - left) / rows.length;
    var svg = '', points = [], dots = '';
    for (var v = 0; v <= 350; v += 50) {
        svg += '<rect x="' + left + '" y="' + (base - v) + '" width="' + (right - left) + '" height="1" fill="#d9d9d9"/>';
        svg += '<text class="end" x="26" y="' + (base - v + 3) + '">' + v + '</text>';
    }
    for (v = 0; v <= 16000; v += 2000) {
        svg += '<text x="605" y="' + Math.round(base - v / 16000 * 350 + 3) + '">' + v + '</text>';
    }
    svg += '<path d="M37.500 366v49M593.500 366v49" stroke="#d9d9d9"/>';
    rows.forEach(function (row, i) {
        var cx = Math.floor(left + step * (i + 0.5)) + 1;
        for (var k = 0; k < 3; k++) {
            svg += '<rect x="' + (cx - 27 + k * 18) + '" y="' + (base - row[k + 3]) + '" width="18" height="' + row[k + 3] + '" fill="' + colors[k] + '"/>';
        }
        var y = base - row[2] / 16000 * 350;
        points.push(cx + ',' + y);
        dots += '<circle cx="' + cx + '" cy="' + y + '" r="3.500" fill="#5b9bd5"/>';
        svg += '<text class="cat" x="' + cx + '" y="387">' + row[1] + '</text>';
    });
    svg += '<text class="cat" x="315" y="412">颜色分类:黑色</text>';
    svg += '<polyline points="' + points.join(' ') + '" fill="none" stroke="#5b9bd5" stroke-width="3"/>' + dots;
    document.getElementById('plot').innerHTML = svg;
}

drawGrid();
drawChart();
```
